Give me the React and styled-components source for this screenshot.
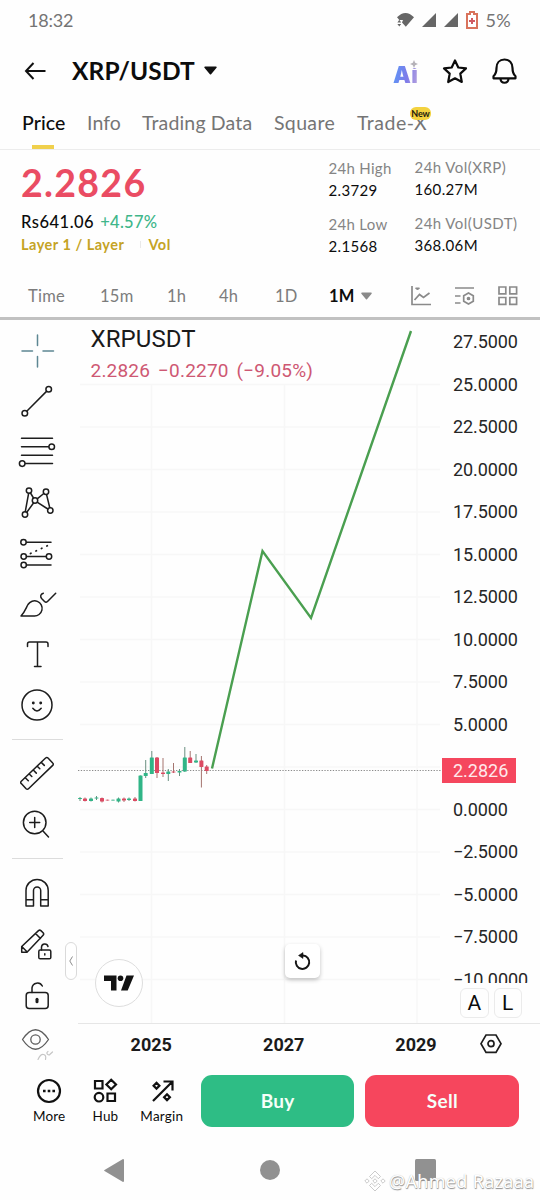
import React, { useState } from 'react';
import styled, { createGlobalStyle } from 'styled-components';

const GlobalStyle = createGlobalStyle`
  * {
    box-sizing: border-box;
  }

  body {
    margin: 0;
    background: #fefefe;
    font-family: Lato, 'Liberation Sans', sans-serif;
    color: #0c0c0c;
  }

  button {
    font: inherit;
    color: inherit;
    background: none;
    border: 0;
    padding: 0;
    cursor: pointer;
  }

  svg {
    display: block;
    flex: none;
    overflow: visible;
  }
`;

const Screen = styled.div`
  display: flex;
  flex-direction: column;
  width: 540px;
  height: 1200px;
  overflow: hidden;
`;

/* status bar */

const StatusBar = styled.div`
  display: flex;
  justify-content: space-between;
  align-items: center;
  height: 41px;
  padding: 0 28px 1px;
  color: #747474;
  font-size: 18px;
`;

const Clock = styled.span`
  letter-spacing: -0.2px;
`;

const StatusIcons = styled.div`
  display: flex;
  align-items: center;
  gap: 8px;

  span {
    width: 26.5px;
    letter-spacing: 0.4px;
  }
`;

/* header */

const Header = styled.header`
  display: flex;
  align-items: center;
  height: 59px;
  padding: 0 22px 0 24px;
`;

const Pair = styled.h1`
  margin: 0 9px 0 26px;
  font-size: 24.5px;
  font-weight: 700;
  letter-spacing: 0.1px;
`;

const HeaderActions = styled.div`
  display: flex;
  align-items: center;
  gap: 24px;
  margin-left: auto;
`;

const AiLogo = styled.span`
  position: relative;
  width: 26px;
  margin-right: -1px;
  font-family: Inter, sans-serif;
  font-size: 22.5px;
  font-weight: 900;
  line-height: 26px;
  letter-spacing: 0.3px;
  background: linear-gradient(100deg, #5f93f5 10%, #7f7be9 55%, #b7a3dd 95%);
  background-clip: text;
  -webkit-text-fill-color: transparent;
  top: 4px;

  svg {
    position: absolute;
    left: 17px;
    top: -2px;
    background: #fefefe;
  }
`;

/* tabs */

const Tabs = styled.nav`
  display: flex;
  gap: 22px;
  height: 50px;
  padding-left: 22px;
  border-bottom: 1px solid #ececec;
`;

const Tab = styled.button`
  position: relative;
  display: flex;
  width: ${({ $width }) => $width}px;
  padding-top: 11px;
  align-items: flex-start;
  white-space: nowrap;
  font-size: 19.5px;
  line-height: 24px;
  font-weight: ${({ $active }) => ($active ? 500 : 400)};
  letter-spacing: ${({ $spacing }) => $spacing || 0}px;
  color: ${({ $active }) => ($active ? '#0c0c0c' : '#757575')};

  &::after {
    content: '';
    position: absolute;
    bottom: 0;
    left: 10px;
    width: 22px;
    height: 4px;
    background: ${({ $active }) => ($active ? '#f0d04c' : 'transparent')};
  }
`;

const NewBadge = styled.span`
  position: absolute;
  top: 7px;
  right: -4px;
  width: 21px;
  height: 13px;
  border-radius: 6px;
  background: #f3d23f;
  color: #1c1a10;
  font-size: 9px;
  font-weight: 700;
  line-height: 13px;
  letter-spacing: -0.1px;
  text-align: center;
`;

/* ticker */

const Ticker = styled.section`
  display: flex;
  height: 124px;
  padding-left: 21px;
`;

const LastPrice = styled.div`
  width: 307.5px;
`;

const BigPrice = styled.div`
  margin-top: 11px;
  color: #ea4c63;
  font-size: 37.5px;
  font-weight: 700;
  line-height: 44px;
  letter-spacing: 1.3px;
`;

const Fiat = styled.div`
  display: flex;
  gap: 6px;
  margin-top: 7px;
  font-size: 16.5px;
  line-height: 20px;
  font-weight: 500;
  letter-spacing: 0.5px;

  em {
    font-style: normal;
    color: #3fb68a;
    letter-spacing: 0.3px;
  }
`;

const Tags = styled.div`
  display: flex;
  margin-top: 3px;
  color: #c5a325;
  font-size: 14.5px;
  line-height: 19px;
  font-weight: 700;
  letter-spacing: 0.5px;
`;

const TagDivider = styled.i`
  width: 1px;
  height: 7px;
  margin: 6px 7px 0 16px;
  background: #e9e9e9;
`;

const StatColumn = styled.dl`
  width: ${({ $width }) => $width}px;
  margin: ${({ $top }) => $top}px 0 0;
  white-space: nowrap;
  font-size: 15px;
  line-height: 22px;

  dt {
    color: #858585;
    letter-spacing: ${({ $spacing }) => $spacing || 0.3}px;
  }

  dd {
    margin: 0 0 12px;
    letter-spacing: 0.35px;
  }
`;

/* intervals */

const Intervals = styled.div`
  display: flex;
  align-items: center;
  height: 46px;
  padding: 1px 0 0 28px;
  border-bottom: 3px solid #c1c1c1;
  color: #7c7c7c;
  font-size: 16.5px;
`;

const Interval = styled.button`
  display: flex;
  flex: none;
  align-items: center;
  gap: 6px;
  width: ${({ $width }) => $width}px;
  letter-spacing: 0.3px;
  font-weight: ${({ $active }) => ($active ? 700 : 400)};
  color: ${({ $active }) => ($active ? '#0c0c0c' : 'inherit')};
`;

const IntervalIcon = styled.button`
  flex: none;
  width: 43.5px;
`;

/* chart */

const Chart = styled.section`
  position: relative;
  display: grid;
  grid-template-columns: 78px 364px 98px;
  grid-template-rows: 703px 39px;
  height: 742px;
  font-family: Roboto, sans-serif;
`;

const Toolbar = styled.aside`
  grid-row: 1 / 3;
  width: 74px;
  height: 742px;
  padding-top: 5.75px;
  overflow: hidden;
`;

const Tool = styled.button`
  display: flex;
  align-items: center;
  justify-content: center;
  width: 74px;
  height: 50.5px;

  svg {
    fill: none;
    stroke: ${({ $color }) => $color || '#1d1d1d'};
    stroke-width: 1.5;
    stroke-linecap: round;
    stroke-linejoin: round;
  }
`;

const ToolDivider = styled.hr`
  width: 51px;
  margin: 9px 0 8px 12px;
  border: 0;
  border-top: 1px solid #dcdcdc;
`;

const Collapse = styled.button`
  position: absolute;
  left: 65px;
  top: 622px;
  display: grid;
  place-items: center;
  width: 12px;
  height: 38px;
  border: 1px solid #dadada;
  border-radius: 6px;
  background: #fff;
`;

const Plot = styled.div`
  position: relative;
  height: 703px;
`;

const Legend = styled.div`
  position: absolute;
  left: 12.5px;
  top: 4px;
  white-space: nowrap;

  h2 {
    margin: 0;
    font-size: 24px;
    line-height: 31px;
    font-weight: 400;
    letter-spacing: 0.1px;
    color: #1a1a1a;
  }

  p {
    margin: 5px 0 0;
    font-size: 19px;
    line-height: 22px;
    color: #ce5873;
    letter-spacing: 0.2px;
    word-spacing: 3px;
  }
`;

const TradingViewBadge = styled.a`
  position: absolute;
  left: 17px;
  top: 638.5px;
  display: grid;
  place-items: center;
  width: 48px;
  height: 48px;
  border: 1.5px solid #dedede;
  border-radius: 50%;
  background: #fff;
`;

const ResetButton = styled.button`
  position: absolute;
  left: 207px;
  top: 624px;
  display: grid;
  place-items: center;
  width: 35px;
  height: 34px;
  border-radius: 5px;
  background: #fff;
  box-shadow: 0 2px 4px rgba(0, 0, 0, 0.24);
`;

const PriceScale = styled.div`
  position: relative;
  height: 703px;
`;

const Prices = styled.ul`
  margin: 0;
  padding: 1px 0 0 11px;
  height: 663px;
  overflow: hidden;
  list-style: none;
  font-size: 18px;
  letter-spacing: -0.1px;
  color: #262626;

  li {
    height: 42.5px;
    line-height: 42.5px;
    white-space: nowrap;
  }
`;

const CurrentPrice = styled.div`
  position: absolute;
  left: 0;
  top: 438px;
  width: 74px;
  height: 25px;
  padding-left: 11px;
  background: #f5475e;
  color: #ffe9ec;
  font-size: 18px;
  line-height: 26px;
`;

const ScaleModes = styled.div`
  display: flex;
  gap: 5px;
  margin: 5px 0 0 18px;
`;

const ScaleMode = styled.button`
  width: 28.5px;
  height: 30px;
  border: 1px solid #ebebeb;
  border-radius: 6px;
  font-size: 21px;
  line-height: 26px;
  text-align: center;
`;

const TimeAxis = styled.div`
  grid-column: 2 / 4;
  display: flex;
  align-items: center;
  border-top: 1.5px solid #e6e6e6;
  padding: 2px 0 0 7px;
  font-size: 18px;
  font-weight: 700;
  color: #1b1b1b;

  span {
    width: 132.5px;
    text-align: center;
  }

  span:last-of-type {
    width: 130px;
    padding-left: 2px;
  }
`;

/* bottom */

const ActionBar = styled.footer`
  display: flex;
  height: 78px;
  padding: 13px 0 0 21px;
`;

const Shortcut = styled.button`
  display: flex;
  flex-direction: column;
  align-items: center;
  width: 56.3px;
  padding-top: 3px;
  font-size: 13.5px;
  line-height: 18px;
  letter-spacing: 0.2px;

  svg {
    margin-bottom: 3px;
    fill: none;
    stroke: #111;
    stroke-width: 2.2;
  }
`;

const TradeButton = styled.button`
  width: ${({ $width }) => $width}px;
  height: 51.5px;
  margin-left: 11px;
  padding-bottom: 1px;
  border-radius: 11px;
  background: ${({ $side }) => ($side === 'buy' ? '#2ebd85' : '#f6465d')};
  color: #f5fff9;
  font-size: 19px;
  font-weight: 700;
  letter-spacing: 0.3px;
`;

const NavBar = styled.div`
  position: relative;
  display: flex;
  justify-content: space-between;
  align-items: center;
  height: 60px;
  padding: 0 104px;
  fill: #919191;
`;

const Watermark = styled.div`
  position: absolute;
  left: 364px;
  top: 29.5px;
  display: flex;
  align-items: center;
  gap: 3px;
  color: #fff;
  font-family: 'Noto Sans', sans-serif;
  font-size: 18px;
  line-height: 22px;
  letter-spacing: 0.3px;
  white-space: nowrap;
  text-shadow: 0.5px 0.5px 1px #8c8c8c, 0 0 1px #bdbdbd;
`;

const intervals = [
  { label: 'Time', width: 72 },
  { label: '15m', width: 67 },
  { label: '1h', width: 52 },
  { label: '4h', width: 56 },
  { label: '1D', width: 54 },
  { label: '1M', width: 82 },
];

const prices = [
  '27.5000', '25.0000', '22.5000', '20.0000', '17.5000', '15.0000', '12.5000', '10.0000',
  '7.5000', '5.0000', '', '0.0000', '−2.5000', '−5.0000', '−7.5000', '−10.0000',
];

// [x, body top, body bottom, wick top, wick bottom, rising]
const candles = [
  [80, 798, 799, 797, 801, true],
  [85, 798.5, 801, 797.5, 801.5, false],
  [91, 798.5, 801, 797.5, 801.5, true],
  [96.5, 797.5, 798.5, 796, 800, true],
  [102, 798, 801.5, 797.5, 802.5, false],
  [107.5, 799.7, 800.5, 799.7, 800.5, false],
  [113, 799.7, 800.5, 799.7, 800.5, true],
  [118.5, 798.5, 801.5, 797.5, 802.5, true],
  [124, 798.5, 800.5, 797.5, 802, false],
  [129, 798.5, 800, 797.5, 801, true],
  [135, 798.5, 801, 797, 801.5, false],
  [140.5, 775.5, 801, 775.5, 801, true],
  [145.7, 773, 776, 760, 778, true],
  [151.8, 757.5, 774, 751, 774, true],
  [157, 757.5, 773, 757, 778, false],
  [163, 772.5, 774, 758, 777, false],
  [168.3, 771.5, 774, 769, 781, true],
  [173.5, 771.5, 772.5, 763, 773, false],
  [179.5, 771, 772.5, 769, 776, true],
  [184.8, 757.5, 771.5, 747, 772, true],
  [190.2, 757.5, 763, 751, 763, false],
  [196, 760.5, 762.5, 754, 763, true],
  [201.4, 760.5, 767, 756, 787.5, false],
  [206.7, 766.5, 771, 765, 774, false],
];

const Caret = ({ width, height, color }) => (
  <svg width={width} height={height} viewBox="0 0 12 8">
    <path d="M1 1h10L6 7z" fill={color} stroke={color} strokeWidth="1.5" strokeLinejoin="round" />
  </svg>
);

const ToolIcon = ({ children }) => (
  <svg width="44" height="44" viewBox="0 0 44 44">{children}</svg>
);

const DrawingTools = () => (
  <Toolbar>
    <Tool $color="#5d8793">
      <ToolIcon><path d="M7 22h10.500M28 22h10.500M22.500 6v10.500M22.500 27.500v10.500" /></ToolIcon>
    </Tool>
    <Tool>
      <ToolIcon>
        <circle cx="33.700" cy="9.200" r="2.800" />
        <circle cx="9.800" cy="33.200" r="2.800" />
        <path d="M31.500 11.400L12 31" />
      </ToolIcon>
    </Tool>
    <Tool>
      <ToolIcon>
        <path d="M6.500 8.300h31M6.500 16.700h27M6.500 25.200h31M10.500 33.600h27" />
        <circle cx="36.700" cy="16.700" r="2.800" />
        <circle cx="7.200" cy="33.600" r="2.800" />
      </ToolIcon>
    </Tool>
    <Tool>
      <ToolIcon>
        <path d="M10.300 30.500L13.600 12.500M15.500 12L18.500 17M22.500 17.700L28.800 12.500M31.600 13.800L34.700 26.500M22.500 21.300L32.800 28M18.500 22L12 31" />
        <circle cx="14" cy="9.600" r="2.700" />
        <circle cx="31" cy="10.800" r="2.700" />
        <circle cx="20" cy="19.500" r="2.700" />
        <circle cx="10" cy="33.500" r="2.700" />
        <circle cx="35.300" cy="29.500" r="2.700" />
      </ToolIcon>
    </Tool>
    <Tool>
      <ToolIcon>
        <path d="M11.500 11.300H36M11.500 25.500H31M11.500 34H36" />
        <path d="M15.500 22.500L34 14" strokeDasharray="0.500 5.500" strokeWidth="1.800" />
        <circle cx="8.500" cy="11.300" r="2.700" />
        <circle cx="8.700" cy="25.500" r="2.700" />
        <circle cx="34" cy="25.500" r="2.700" />
        <circle cx="8.700" cy="34" r="2.700" />
      </ToolIcon>
    </Tool>
    <Tool>
      <ToolIcon>
        <path d="M6 34C10 30 11 26 13 22.500A7.600 7.600 0 1 1 19 34z" />
        <path d="M28.300 11.200C25.500 12 25 14.500 26.600 16.500L29.500 19.500Q31 20.800 32.500 19.500L40.700 11.200" />
      </ToolIcon>
    </Tool>
    <Tool>
      <ToolIcon><path d="M12.500 14.500V12q0-2 2-2h16.500q2 0 2 2v2.500M22.500 10v24.500M19.500 34.500h6.500" /></ToolIcon>
    </Tool>
    <Tool>
      <ToolIcon>
        <circle cx="22" cy="22" r="15" />
        <circle cx="18.300" cy="20" r="0.700" />
        <circle cx="25.700" cy="20" r="0.700" />
        <path d="M17.800 25.300q4.200 5.400 8.400 0" />
      </ToolIcon>
    </Tool>
    <ToolDivider />
    <Tool>
      <ToolIcon>
        <path d="M6.300 30.200L30.600 7q1.200-1.200 2.400 0L37.700 12q1.200 1.200 0 2.400L13.500 37.700q-1.200 1.200-2.400 0L6.300 32.600q-1.200-1.200 0-2.400z" />
        <path d="M10.500 27l2.800 2.800M14.500 23.200l2.300 2.300M18.500 19.300l2.800 2.800M22.500 15.500l2.300 2.300M26.500 11.600l2.800 2.800" />
      </ToolIcon>
    </Tool>
    <Tool>
      <ToolIcon>
        <circle cx="19.700" cy="20.500" r="11.300" />
        <path d="M28 29l5.500 6M14.700 20.500h10M19.700 15.500v10" />
      </ToolIcon>
    </Tool>
    <ToolDivider />
    <Tool>
      <ToolIcon>
        <path d="M11 36V20.500a11.100 11.100 0 0 1 22.200 0V36h-7.500V20.500a3.600 3.600 0 0 0-7.200 0V36zM11 29.700h7.500M25.700 29.700h7.500" />
      </ToolIcon>
    </Tool>
    <Tool>
      <ToolIcon>
        <path d="M6.700 25.500L23.500 9.600q1.200-1 2.400 0l2.200 2.200q1.200 1.200 0 2.400L12 31.300H6.700zM20.500 12.500l5 5M7 25.700l5 5" />
        <rect x="23.800" y="29" width="12" height="8.800" rx="1.400" />
        <path d="M26.500 29v-3a3.300 3.300 0 0 1 6.500-.5M29.800 32.700v1.300" />
      </ToolIcon>
    </Tool>
    <Tool>
      <ToolIcon>
        <rect x="11.200" y="21.500" width="22" height="16" rx="3" />
        <path d="M17 21.500v-4.700a5.500 5.500 0 0 1 10.300-1.800" />
        <path d="M22 28.200v2.600" strokeWidth="3" />
      </ToolIcon>
    </Tool>
    <Tool $color="#5c5c5c">
      <ToolIcon>
        <path d="M7.500 17.500Q20.500-2 33.500 17.500Q20.500 37 7.500 17.500z" strokeWidth="1.300" />
        <circle cx="20.500" cy="17.500" r="4.700" strokeWidth="1.300" />
        <path d="M23 37.500q2.500-5.500 5.500-5t2 5M33 29.500q-2 1.500-.5 2.800t2.500 0l2.500-2.300" stroke="#c6c6c6" strokeWidth="1.200" />
      </ToolIcon>
    </Tool>
  </Toolbar>
);

const PriceChart = () => (
  <svg width="364" height="703" viewBox="78 320 364 703">
    <g stroke="#f7f7f7" strokeWidth="1.500">
      {prices.map((price, i) => (
        i > 0 && <path key={i} d={`M80 ${342 + i * 42.5}H440`} />
      ))}
      {[151.5, 284.5, 417].map((x) => <path key={x} d={`M${x} 385V1023`} />)}
    </g>
    <path d="M78 770.500H442" stroke="#8b8b8b" strokeWidth="1" strokeDasharray="1.300 1.500" />
    {candles.map(([x, top, bottom, high, low, up]) => (
      <g key={x} fill={up ? '#31b587' : '#dc4a63'}>
        <rect x={x - 0.5} y={high} width="1" height={low - high} fill={up ? '#6a8f80' : '#a5756f'} />
        <rect x={x - 2} y={top} width="4" height={bottom - top} rx="0.500" />
      </g>
    ))}
    <path d="M212 768.500L262.500 551L311 618L411 331" fill="none" stroke="#4a9f50" strokeWidth="2.400" />
  </svg>
);

const App = () => {
  const [interval, setInterval] = useState('1M');

  return (
    <Screen>
      <GlobalStyle />
      <StatusBar>
        <Clock>18:32</Clock>
        <StatusIcons>
          <svg width="17" height="14" viewBox="0 0 17 14" fill="#666">
            <path d="M0 4.300Q8.500-4.300 17 4.300L8.800 13.800L5 9.500L6 7H2.300z" />
            <path d="M2.300 6.800l1.900 2.600H.4zM2.300 13.400l1.900-2.400H.4z" />
          </svg>
          <svg width="14" height="14" viewBox="0 0 14 14" fill="#666"><path d="M14 0v14H0z" /></svg>
          <svg width="14" height="14" viewBox="0 0 14 14" fill="#666"><path d="M14 0v14H0z" /></svg>
          <svg width="12" height="18" viewBox="0 0 12 18">
            <path d="M4 1h4v2h3v14H1V3h3z" fill="#fff" stroke="#d9735c" strokeWidth="2" />
            <path d="M6 7v6M3 10h6" stroke="#d05a62" strokeWidth="2" />
          </svg>
          <span>5%</span>
        </StatusIcons>
      </StatusBar>

      <Header>
        <svg width="22" height="18" viewBox="0 0 22 18" fill="none" stroke="#111" strokeWidth="2">
          <path d="M21.500 9H2M9.500 1L2 9L9.500 17" />
        </svg>
        <Pair>XRP/USDT</Pair>
        <Caret width={13} height={9} color="#111" />
        <HeaderActions>
          <AiLogo>
            Ai
            <svg width="8" height="8" viewBox="0 0 8 8">
              <path d="M4 0l1.200 2.800L8 4L5.200 5.200L4 8L2.800 5.200L0 4l2.800-1.200z" fill="#b5b2b8" />
            </svg>
          </AiLogo>
          <svg width="26" height="26" viewBox="0 0 26 26" fill="none" stroke="#0c0c0c" strokeWidth="2.200" strokeLinejoin="round">
            <path d="M13 2.500l3.300 7 7.700.9-5.700 5.200 1.500 8.400L13 20.300 6.200 24l1.500-8.400L2 10.400l7.700-.9z" />
          </svg>
          <svg width="26" height="26" viewBox="0 0 26 26" fill="none" stroke="#0c0c0c" strokeWidth="2.200" strokeLinejoin="round">
            <path d="M12.500 1.500c-5 0-8 3.500-8 8.500 0 4-1 6.500-3 8.300V20.300h22V18.300c-2-1.800-3-4.300-3-8.300 0-5-3-8.500-8-8.500zM8.500 21c.5 5 7.500 5 8 0" />
          </svg>
        </HeaderActions>
      </Header>

      <Tabs>
        <Tab $width={43} $active $spacing={0.1}>Price</Tab>
        <Tab $width={33} $spacing={0.1}>Info</Tab>
        <Tab $width={110} $spacing={0.15}>Trading Data</Tab>
        <Tab $width={61} $spacing={0.35}>Square</Tab>
        <Tab $width={70} $spacing={0.5}>
          Trade-X
          <NewBadge>New</NewBadge>
        </Tab>
      </Tabs>

      <Ticker>
        <LastPrice>
          <BigPrice>2.2826</BigPrice>
          <Fiat>Rs641.06 <em>+4.57%</em></Fiat>
          <Tags>
            Layer 1 / Layer
            <TagDivider />
            Vol
          </Tags>
        </LastPrice>
        <StatColumn $width={86} $top={7}>
          <dt>24h High</dt>
          <dd>2.3729</dd>
          <dt>24h Low</dt>
          <dd>2.1568</dd>
        </StatColumn>
        <StatColumn $width={110} $top={5.5} $spacing={0.45}>
          <dt>24h Vol(XRP)</dt>
          <dd>160.27M</dd>
          <dt>24h Vol(USDT)</dt>
          <dd>368.06M</dd>
        </StatColumn>
      </Ticker>

      <Intervals>
        {intervals.map(({ label, width }) => (
          <Interval
            key={label}
            $width={width}
            $active={label === interval}
            onClick={() => setInterval(label)}
          >
            {label}
            {label === '1M' && <Caret width={11} height={8} color="#8a8a8a" />}
          </Interval>
        ))}
        <IntervalIcon>
          <svg width="20" height="20" viewBox="0 0 20 20" fill="none" stroke="#8a8a8a" strokeWidth="1.700">
            <path d="M1 0v18.500h19M3.500 14l5-5.500 4 3L18.500 7" />
            <path d="M4.500 2h4L6.500 4z" fill="#8a8a8a" strokeWidth="1" />
          </svg>
        </IntervalIcon>
        <IntervalIcon>
          <svg width="20" height="20" viewBox="0 0 20 20" fill="none" stroke="#8a8a8a" strokeWidth="1.700">
            <path d="M0 2h19M0 10h5.500M0 17h5.500M13.500 7l4.800 2.800v5.400L13.500 18l-4.800-2.800V9.800z" />
            <circle cx="13.500" cy="12.500" r="1" fill="#8a8a8a" />
          </svg>
        </IntervalIcon>
        <IntervalIcon>
          <svg width="20" height="20" viewBox="0 0 20 20" fill="none" stroke="#8a8a8a" strokeWidth="1.700">
            <path d="M1 1h6.800v6.800H1zM11.800 1h6.800v6.800h-6.800zM1 11.500h6.800v6.800H1zM11.800 11.500h6.800v6.800h-6.800z" />
          </svg>
        </IntervalIcon>
      </Intervals>

      <Chart>
        <DrawingTools />
        <Plot>
          <PriceChart />
          <Legend>
            <h2>XRPUSDT</h2>
            <p>2.2826 −0.2270 (−9.05%)</p>
          </Legend>
          <TradingViewBadge>
            <svg width="30" height="16" viewBox="0 0 30 16" fill="#131313">
              <path d="M0 .5h12.500V15.500H7V6H0zM22.500 .5h7.500L23.700 15.500H17z" />
              <circle cx="16.500" cy="3.300" r="2.800" />
            </svg>
          </TradingViewBadge>
          <ResetButton>
            <svg width="18" height="18" viewBox="0 0 18 18" fill="none" stroke="#151515" strokeWidth="2">
              <path d="M2 8.500A6.700 6.700 0 1 0 9 3.500H7" />
              <path d="M9 .5v6L4.500 3.500z" fill="#151515" strokeWidth="0.500" />
            </svg>
          </ResetButton>
        </Plot>
        <PriceScale>
          <Prices>
            {prices.map((price, i) => <li key={i}>{price}</li>)}
          </Prices>
          <CurrentPrice>2.2826</CurrentPrice>
          <ScaleModes>
            <ScaleMode>A</ScaleMode>
            <ScaleMode>L</ScaleMode>
          </ScaleModes>
        </PriceScale>
        <TimeAxis>
          <span>2025</span>
          <span>2027</span>
          <span>2029</span>
          <svg width="22" height="20" viewBox="0 0 22 20" fill="none" stroke="#1d1d1d" strokeWidth="1.700">
            <path d="M6 1h10l5 8.700-5 8.700H6L1 9.700z" />
            <circle cx="11" cy="9.700" r="3" />
          </svg>
        </TimeAxis>
        <Collapse>
          <svg width="4" height="10" viewBox="0 0 4 10" fill="none" stroke="#8c8c8c">
            <path d="M3.500 .5L.8 5l2.700 4.500" />
          </svg>
        </Collapse>
      </Chart>

      <ActionBar>
        <Shortcut>
          <svg width="26" height="26" viewBox="0 0 26 26">
            <circle cx="13" cy="13" r="11" />
            <path d="M7 13h2.600M11.700 13h2.600M16.400 13h2.600" strokeWidth="2.600" />
          </svg>
          More
        </Shortcut>
        <Shortcut>
          <svg width="26" height="26" viewBox="0 0 26 26">
            <path d="M3 3h7.500v7.500H3zM15.500 15.500H23V23h-7.500zM19.200 1.700l4.800 4.800-4.800 4.800-4.800-4.800z" />
            <circle cx="7" cy="19.200" r="4.300" />
          </svg>
          Hub
        </Shortcut>
        <Shortcut>
          <svg width="26" height="26" viewBox="0 0 26 26">
            <path d="M4 23L22.500 4.500M14.500 3.500h9v9M7.500 4.800l2.900 2.900-2.900 2.900-2.900-2.900zM18 16.300l2.900 2.900L18 22.100l-2.900-2.900z" />
          </svg>
          Margin
        </Shortcut>
        <TradeButton $side="buy" $width={153.5}>Buy</TradeButton>
        <TradeButton $side="sell" $width={154}>Sell</TradeButton>
      </ActionBar>

      <NavBar>
        <svg width="20" height="23" viewBox="0 0 20 23"><path d="M19 0q1 0 1 1v21q0 1-1 1L.5 12q-1-.5 0-1z" /></svg>
        <svg width="20" height="20" viewBox="0 0 20 20"><circle cx="10" cy="10" r="10" /></svg>
        <svg width="21" height="22" viewBox="0 0 21 22"><rect width="21" height="22" rx="1.500" /></svg>
        <Watermark>
          <svg width="22" height="22" viewBox="0 0 22 22" fill="#fff" stroke="#bcbcbc" strokeWidth="0.800">
            <path d="M11 1l5.500 5.500-2.200 2.200L11 5.400 7.700 8.700 5.500 6.500zM11 21l5.500-5.500-2.200-2.200L11 16.600l-3.300-3.300-2.200 2.200zM11 8.800l2.200 2.200-2.200 2.200L8.800 11zM3 8.800L5.200 11 3 13.200.8 11zM19 8.800l2.200 2.200-2.200 2.200-2.200-2.200z" />
          </svg>
          @Ahmed Razaaa
        </Watermark>
      </NavBar>
    </Screen>
  );
};

export default App;
